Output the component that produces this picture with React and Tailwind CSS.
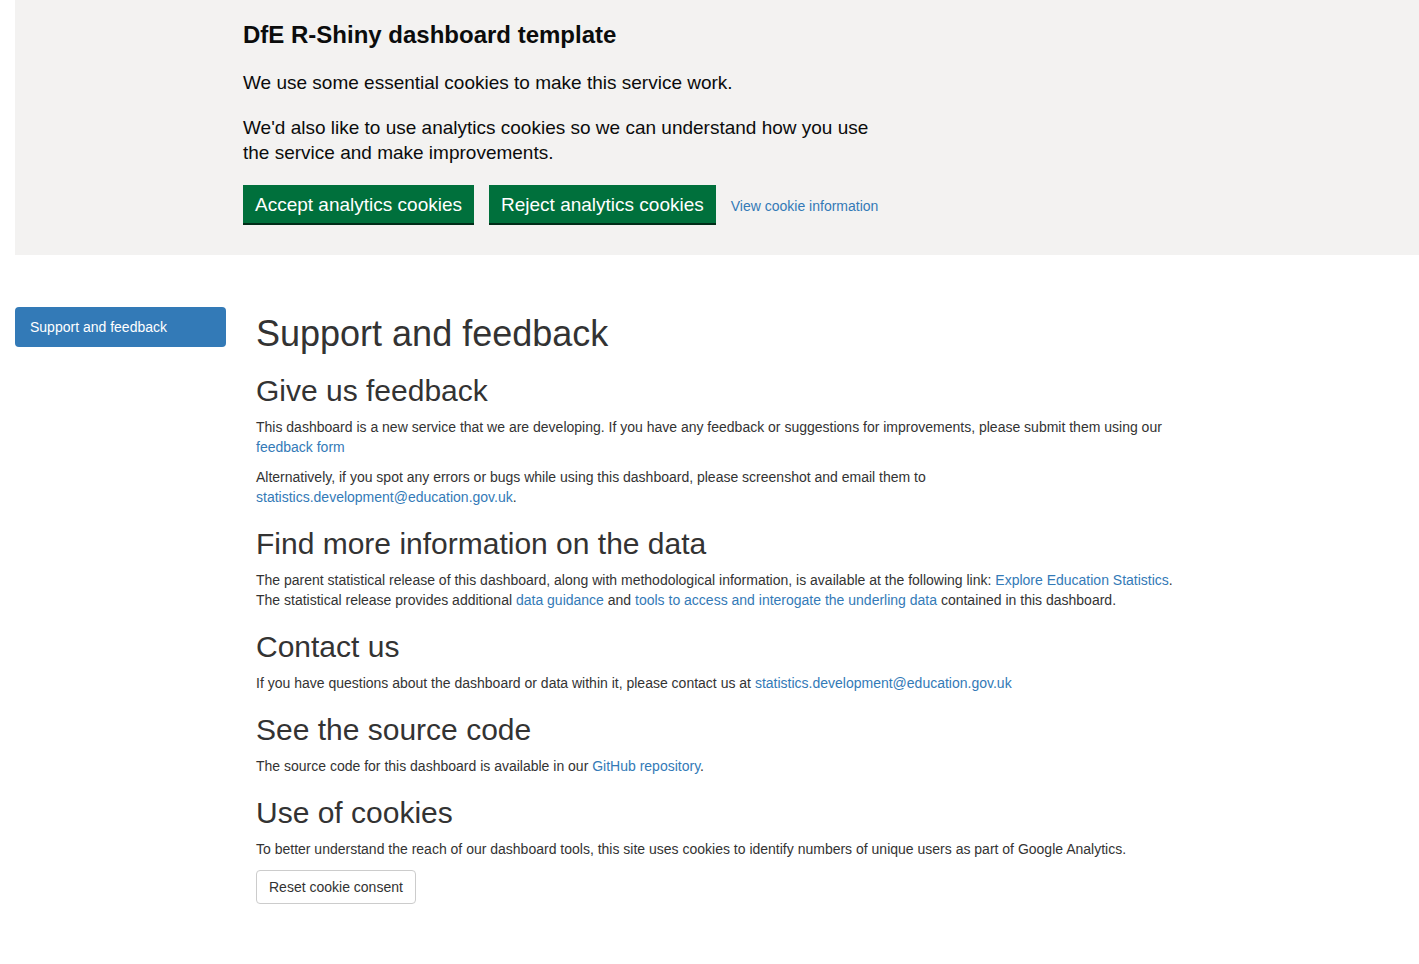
import React from "react";

export default function App() {
  const link = "text-[#337ab7] hover:underline";

  return (
    <div className="min-h-screen bg-white font-['Liberation_Sans',Arial,sans-serif] text-[14px] leading-[20px] text-[#333]">
      {/* Cookie banner */}
      <div className="ml-[15px] bg-[#f3f2f1] pt-[20px] pb-[32px] pl-[228px] text-[#0b0c0c]">
        <div className="w-[640px]">
          <h2 className="text-[24px] leading-[30px] font-bold mb-[20px]">DfE R-Shiny dashboard template</h2>
          <p className="text-[19px] leading-[25px] mb-[20px]">We use some essential cookies to make this service work.</p>
          <p className="text-[19px] leading-[25px] mb-[20px]">
            We'd also like to use analytics cookies so we can understand how you use the service and make improvements.
          </p>
        </div>
        <div className="flex items-center">
          <button className="h-[38px] px-[12px] pt-[1px] bg-[#00703c] text-white text-[19px] leading-[19px] shadow-[0_2px_0_#002d18]">
            Accept analytics cookies
          </button>
          <button className="ml-[15px] h-[38px] px-[12px] pt-[1px] bg-[#00703c] text-white text-[19px] leading-[19px] shadow-[0_2px_0_#002d18]">
            Reject analytics cookies
          </button>
          <a href="#" className={`ml-[15px] mt-[4px] ${link}`}>View cookie information</a>
        </div>
      </div>

      {/* Main layout */}
      <div className="flex items-start mt-[52px]">
        <div className="w-[241px] pl-[15px] pr-[15px] shrink-0">
          <div className="h-[40px] rounded-[4px] bg-[#337ab7] px-[15px] py-[10px] text-white">Support and feedback</div>
        </div>
        <div className="w-[941px] pl-[15px] pt-[7px]">
          <h1 className="text-[36px] leading-[40px] mb-[20px]">Support and feedback</h1>

          <h2 className="text-[30px] leading-[33px] mb-[10px]">Give us feedback</h2>
          <p className="mb-[10px]">
            This dashboard is a new service that we are developing. If you have any feedback or suggestions for improvements, please submit them using our{" "}
            <a href="#" className={link}>feedback form</a>
          </p>
          <p className="mb-[10px]">
            Alternatively, if you spot any errors or bugs while using this dashboard, please screenshot and email them to{" "}
            <a href="#" className={link}>statistics.development@education.gov.uk</a>.
          </p>

          <h2 className="text-[30px] leading-[33px] mt-[20px] mb-[10px]">Find more information on the data</h2>
          <p className="mb-[10px]">
            The parent statistical release of this dashboard, along with methodological information, is available at the following link:{" "}
            <a href="#" className={link}>Explore Education Statistics</a>. The statistical release provides additional{" "}
            <a href="#" className={link}>data guidance</a> and{" "}
            <a href="#" className={link}>tools to access and interogate the underling data</a> contained in this dashboard.
          </p>

          <h2 className="text-[30px] leading-[33px] mt-[20px] mb-[10px]">Contact us</h2>
          <p className="mb-[10px]">
            If you have questions about the dashboard or data within it, please contact us at{" "}
            <a href="#" className={link}>statistics.development@education.gov.uk</a>
          </p>

          <h2 className="text-[30px] leading-[33px] mt-[20px] mb-[10px]">See the source code</h2>
          <p className="mb-[10px]">
            The source code for this dashboard is available in our <a href="#" className={link}>GitHub repository</a>.
          </p>

          <h2 className="text-[30px] leading-[33px] mt-[20px] mb-[10px]">Use of cookies</h2>
          <p className="mb-[10px]">
            To better understand the reach of our dashboard tools, this site uses cookies to identify numbers of unique users as part of Google Analytics.
          </p>
          <button className="mt-[1px] h-[34px] px-[12px] rounded-[4px] border border-[#ccc] bg-white text-[#333]">
            Reset cookie consent
          </button>
        </div>
      </div>
    </div>
  );
}
